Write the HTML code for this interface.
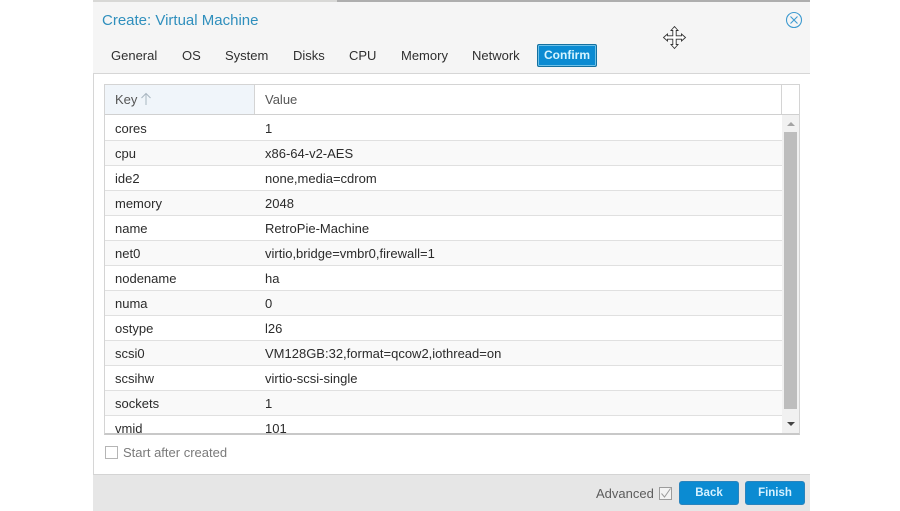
<!DOCTYPE html>
<html><head><meta charset="utf-8">
<style>
html,body{margin:0;padding:0;background:#fff}
body{width:900px;height:511px;position:relative;overflow:hidden;font-family:"Liberation Sans",Arial,sans-serif;font-size:13px;color:#2b2b2b}
.a{position:absolute;white-space:nowrap}
.tab{position:absolute;top:47px;line-height:17px;font-size:13px;color:#2f2f2f}
.row{position:absolute;left:105px;width:677px;height:24px;border-bottom:1px solid #e0e0e0;overflow:hidden}
.row.alt{background:#f9f9f9}
.row span{position:absolute;top:4px;line-height:17px;white-space:nowrap}
.row span:first-child{left:10px}
.row span:last-child{left:160px}
.btn{position:absolute;top:481px;height:24px;border-radius:3px;background:#0b8bd2;border:1px solid #2a84bd;box-sizing:border-box;color:#d6f1ff;font-weight:bold;font-size:11.5px;line-height:23px;text-align:center}
</style></head><body>
<div class="a" style="left:93px;top:0;width:244px;height:2px;background:#d8d8d6"></div>
<div class="a" style="left:337px;top:0;width:473px;height:2px;background:#aeaeae"></div>
<div class="a" style="left:93px;top:2px;width:717px;height:71px;background:#f5f5f5"></div>
<div class="a" style="left:93px;top:73px;width:717px;height:1px;background:#d6d6d6"></div>
<div class="a" style="left:93px;top:74px;width:1px;height:400px;background:#d6d6d6"></div>
<div class="a" style="left:102px;top:12px;font-size:15px;line-height:18px;color:#2f8fbd">Create: Virtual Machine</div>
<svg class="a" style="left:785px;top:11px" width="18" height="18" viewBox="0 0 18 18" fill="none" stroke="#3f9bd0" stroke-width="1.1"><circle cx="9" cy="9" r="7.5"/><path d="M5.5 5.5L12.5 12.5M12.5 5.5L5.5 12.5"/></svg>
<div class="tab" style="left:111px">General</div>
<div class="tab" style="left:182px">OS</div>
<div class="tab" style="left:225px">System</div>
<div class="tab" style="left:293px">Disks</div>
<div class="tab" style="left:349px">CPU</div>
<div class="tab" style="left:401px">Memory</div>
<div class="tab" style="left:472px">Network</div>
<div class="a" style="left:537px;top:44px;width:60px;height:23px;box-sizing:border-box;background:#0b8bd2;border:1px solid #14709f;border-radius:2px;box-shadow:inset 0 0 0 1px #6cc0e8;color:#d6f4ff;font-weight:bold;font-size:12px;line-height:21px;text-align:center">Confirm</div>
<svg class="a" style="left:662px;top:25px" width="25" height="25" viewBox="0 0 25 25" fill="#fff" stroke="#333" stroke-width=".9"><path d="M12.5 1.5L16 5.5H14.2V10.8H19.5V9L23.5 12.5L19.5 16V14.2H14.2V19.5H16L12.5 23.5L9 19.5H10.8V14.2H5.5V16L1.5 12.5L5.5 9V10.8H10.8V5.5H9Z"/></svg>

<div class="a" style="left:104px;top:84px;width:696px;height:351px;box-sizing:border-box;border:1px solid #d4d4d4;border-bottom:2px solid #c8c8c8"></div>
<div class="a" style="left:105px;top:85px;width:149px;height:29px;background:#f0f5fa"></div>
<div class="a" style="left:254px;top:85px;width:1px;height:29px;background:#d4d4d4"></div>
<div class="a" style="left:781px;top:85px;width:1px;height:29px;background:#d4d4d4"></div>
<div class="a" style="left:105px;top:114px;width:694px;height:1px;background:#d0d0d0"></div>
<div class="a" style="left:115px;top:91px;line-height:17px;color:#555">Key</div>
<svg class="a" style="left:140px;top:92px" width="12" height="14" viewBox="0 0 12 14" fill="none" stroke="#a9b6c0" stroke-width="1"><path d="M6 13V1.5M1.5 6L6 1.5L10.5 6"/></svg>
<div class="a" style="left:265px;top:91px;line-height:17px;color:#555">Value</div>

<div class="row" style="top:116px"><span>cores</span><span>1</span></div>
<div class="row alt" style="top:141px"><span>cpu</span><span>x86-64-v2-AES</span></div>
<div class="row" style="top:166px"><span>ide2</span><span>none,media=cdrom</span></div>
<div class="row alt" style="top:191px"><span>memory</span><span>2048</span></div>
<div class="row" style="top:216px"><span>name</span><span>RetroPie-Machine</span></div>
<div class="row alt" style="top:241px"><span>net0</span><span>virtio,bridge=vmbr0,firewall=1</span></div>
<div class="row" style="top:266px"><span>nodename</span><span>ha</span></div>
<div class="row alt" style="top:291px"><span>numa</span><span>0</span></div>
<div class="row" style="top:316px"><span>ostype</span><span>l26</span></div>
<div class="row alt" style="top:341px"><span>scsi0</span><span>VM128GB:32,format=qcow2,iothread=on</span></div>
<div class="row" style="top:366px"><span>scsihw</span><span>virtio-scsi-single</span></div>
<div class="row alt" style="top:391px"><span>sockets</span><span>1</span></div>
<div class="row" style="top:416px;height:17px;border:0"><span>vmid</span><span>101</span></div>

<div class="a" style="left:782px;top:115px;width:17px;height:318px;background:#f1f1f1"></div>
<div class="a" style="left:784px;top:132px;width:13px;height:277px;background:#bdbdbd"></div>
<div class="a" style="left:787px;top:122px;width:0;height:0;border:4px solid transparent;border-top:0;border-bottom:4px solid #a3a3a3"></div>
<div class="a" style="left:787px;top:422px;width:0;height:0;border:4px solid transparent;border-bottom:0;border-top:4px solid #444"></div>

<div class="a" style="left:105px;top:446px;width:13px;height:13px;box-sizing:border-box;border:1px solid #b5b5b5;background:#fff"></div>
<div class="a" style="left:123px;top:444px;line-height:17px;color:#7a7a7a">Start after created</div>

<div class="a" style="left:93px;top:474px;width:717px;height:37px;background:#e6e6e6;border-top:1px solid #d4d4d4;box-sizing:border-box"></div>
<div class="a" style="left:596px;top:485px;line-height:17px;color:#5c5c5c">Advanced</div>
<svg class="a" style="left:659px;top:487px" width="13" height="13" viewBox="0 0 13 13" fill="#f3f3f3" stroke="#9c9c9c" stroke-width="1"><rect x=".5" y=".5" width="12" height="12"/><path d="M2.5 6.5L5.5 10L11.5 1.5" fill="none"/></svg>
<div class="btn" style="left:679px;width:60px">Back</div>
<div class="btn" style="left:745px;width:60px">Finish</div>
</body></html>
